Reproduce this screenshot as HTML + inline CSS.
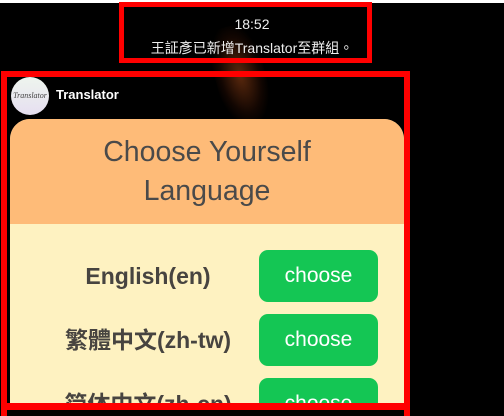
<!DOCTYPE html>
<html><head><meta charset="utf-8"><style>
*{margin:0;padding:0;box-sizing:border-box}
body{width:504px;height:410px;background:#000;position:relative;overflow:hidden;font-family:"Liberation Sans","Noto Sans CJK TC",sans-serif}
.top{position:absolute;left:0;top:0;width:504px;height:3px;background:#fff}
.flame{position:absolute;left:215px;top:25px;width:50px;height:100px;background:radial-gradient(ellipse at center,rgba(200,90,30,.45),rgba(120,40,10,.15) 55%,transparent 75%);transform:rotate(-15deg)}
.b1{position:absolute;left:119px;top:2px;width:253px;height:61px;border:5px solid #f00}
.t1{position:absolute;left:0;width:504px;text-align:center;color:#eee;font-size:14px}
.b2{position:absolute;left:1px;top:71px;width:409px;height:345px;border:6px solid #f00;border-bottom-width:0}
.bb{position:absolute;left:1px;top:403px;width:409px;height:7px;background:#f00}
.av{position:absolute;left:11px;top:77px;width:38px;height:38px;border-radius:50%;background:linear-gradient(#eef5ee,#e6dff0);font-family:"Liberation Serif",serif;font-style:italic;font-size:8px;color:#444;text-align:center;line-height:38px}
.name{position:absolute;left:56px;top:87px;color:#fff;font-weight:bold;font-size:13px}
.card{position:absolute;left:10px;top:119px;width:394px;height:290px;border-radius:20px 20px 0 0;overflow:hidden;background:#fef2c1}
.hd{height:105px;background:#febb78;color:#4a4a4a;font-size:28.5px;text-align:center;line-height:39px;padding-top:14px}
.row{position:absolute;left:0;width:394px;height:52px}
.lbl{position:absolute;left:0;width:276px;text-align:center;top:0;line-height:52px;font-weight:bold;font-size:23px;color:#474440}
.btn{position:absolute;left:249px;top:0;width:119px;height:52px;border-radius:9px;background:#14c654;color:#fff;font-size:21px;text-align:center;line-height:52px}
</style></head><body>
<div class="top"></div>
<div class="flame"></div>
<div class="t1" style="top:16px">18:52</div>
<div class="t1" style="top:38px">王証彥已新增Translator至群組。</div>
<div class="b1"></div>
<div class="av">Translator</div>
<div class="name">Translator</div>
<div class="card">
<div class="hd">Choose Yourself<br>Language</div>
<div class="row" style="top:131px"><div class="lbl">English(en)</div><div class="btn">choose</div></div>
<div class="row" style="top:195px"><div class="lbl">繁體中文(zh-tw)</div><div class="btn">choose</div></div>
<div class="row" style="top:259px"><div class="lbl">简体中文(zh-cn)</div><div class="btn">choose</div></div>
</div>
<div class="b2"></div>
<div class="bb"></div>
</body></html>
